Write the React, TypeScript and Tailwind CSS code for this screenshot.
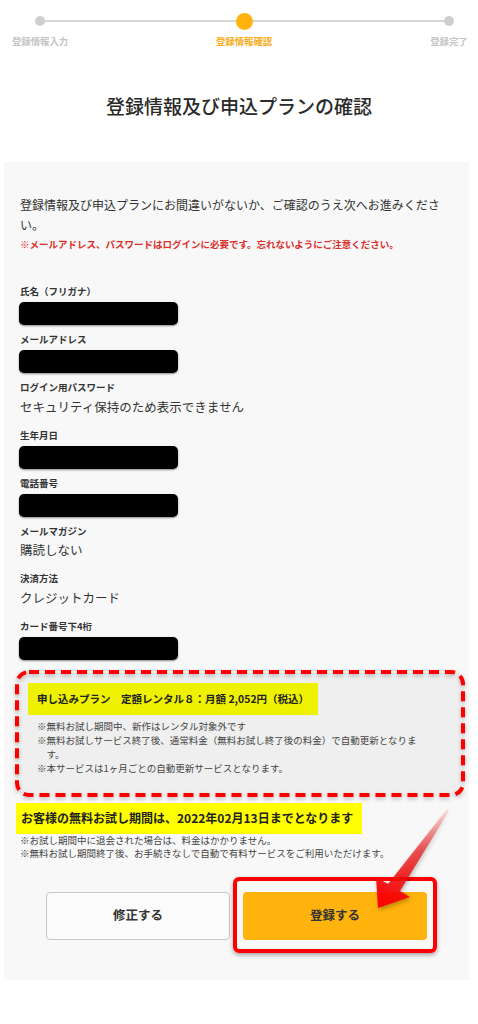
import React from "react";

const font = { fontFamily: '"Noto Sans CJK JP", "Noto Sans", sans-serif' };

function Label({ children }: { children: React.ReactNode }) {
  return <div className="text-[9.5px] font-bold leading-[14px] text-[#333]">{children}</div>;
}

function Block() {
  return <div className="mt-[4px] h-[23px] w-[159px] -ml-[1px] rounded-[5px] bg-black shadow-[0_1px_2px_rgba(0,0,0,0.45)]" />;
}

function Value({ children }: { children: React.ReactNode }) {
  return <div className="mt-[2.5px] text-[12.5px] leading-[20px] text-[#333]">{children}</div>;
}

export default function App() {
  return (
    <div className="relative w-[478px] min-h-[1024px] bg-white" style={font}>
      {/* stepper */}
      <div className="relative pt-[12px]">
        <div className="absolute left-[40px] right-[29px] top-[20px] h-[2px] bg-[#d6d6d6]" />
        <div className="relative flex">
          <div className="ml-[12px] flex w-[56px] flex-col items-center">
            <div className="flex h-[18px] items-center">
              <div className="h-[10px] w-[10px] rounded-full bg-[#cfcfcf]" />
            </div>
            <div className="mt-[4px] whitespace-nowrap text-[9.4px] font-bold leading-[14px] text-[#c4c4c4]">登録情報入力</div>
          </div>
          <div className="ml-[148px] flex w-[56px] flex-col items-center">
            <div className="flex h-[18px] items-center">
              <div className="h-[17px] w-[17px] rounded-full bg-[#ffb30c]" />
            </div>
            <div className="mt-[4px] whitespace-nowrap text-[9.4px] font-bold leading-[14px] text-[#f7ac1a]">登録情報確認</div>
          </div>
          <div className="ml-[149px] flex w-[56px] flex-col items-center">
            <div className="flex h-[18px] items-center">
              <div className="h-[10px] w-[10px] rounded-full bg-[#cfcfcf]" />
            </div>
            <div className="mt-[4px] whitespace-nowrap text-[9.4px] font-bold leading-[14px] text-[#c4c4c4]">登録完了</div>
          </div>
        </div>
      </div>

      <h1 className="mt-[44px] text-center text-[19px] font-medium leading-[28px] text-[#2a2a2a]">登録情報及び申込プランの確認</h1>

      {/* panel */}
      <div className="ml-[4px] mt-[42px] w-[465px] bg-[#f8f8f8] px-4 pb-[40px] pt-[33px]">
        <p className="text-[12px] leading-[20px] text-[#333]">
          登録情報及び申込プランにお間違いがないか、ご確認のうえ次へお進みください。
        </p>
        <p className="mt-[2px] text-[9.5px] font-bold leading-[14px] text-[#dc2f2c]">
          ※メールアドレス、パスワードはログインに必要です。忘れないようにご注意ください。
        </p>

        <div className="mt-[33px]">
          <Label>氏名（フリガナ）</Label>
          <Block />
        </div>
        <div className="mt-[7px]">
          <Label>メールアドレス</Label>
          <Block />
        </div>
        <div className="mt-[7px]">
          <Label>ログイン用パスワード</Label>
          <Value>セキュリティ保持のため表示できません</Value>
        </div>
        <div className="mt-[11px]">
          <Label>生年月日</Label>
          <Block />
        </div>
        <div className="mt-[7px]">
          <Label>電話番号</Label>
          <Block />
        </div>
        <div className="mt-[7px]">
          <Label>メールマガジン</Label>
          <Value>購読しない</Value>
        </div>
        <div className="mt-[11px]">
          <Label>決済方法</Label>
          <Value>クレジットカード</Value>
        </div>
        <div className="mt-[11px]">
          <Label>カード番号下4桁</Label>
          <Block />
        </div>

        {/* plan box */}
        <div className="relative -ml-[5px] mt-[10px] w-[450px] rounded-[14px] bg-[#efefef] px-[13px] pb-[22px] pt-[13px]">
          <div className="inline-block h-[32px] bg-[#eef200] px-[9px] text-[10.5px] font-bold leading-[32px] text-[#222]">
            申し込みプラン　定額レンタル８：月額 2,052円（税込）
          </div>
          <div className="mt-[4px] pl-[9px] pr-[30px] text-[9.5px] leading-[14px] text-[#444]">
            <p className="pl-[1em] -indent-[1em]">※無料お試し期間中、新作はレンタル対象外です</p>
            <p className="pl-[1em] -indent-[1em]">※無料お試しサービス終了後、通常料金（無料お試し終了後の料金）で自動更新となります。</p>
            <p className="pl-[1em] -indent-[1em]">※本サービスは1ヶ月ごとの自動更新サービスとなります。</p>
          </div>
          <svg className="pointer-events-none absolute inset-[2px] h-[calc(100%-4px)] w-[calc(100%-4px)] overflow-visible" style={{ filter: "drop-shadow(0 2px 2px rgba(0,0,0,0.25))" }}>
            <rect x="0" y="0" width="100%" height="100%" rx="12" ry="12" fill="none" stroke="#ff0000" strokeWidth="4" strokeDasharray="10 6" />
          </svg>
        </div>

        {/* trial */}
        <div className="-ml-[4px] mt-[6px] flex h-[31px] w-fit items-center whitespace-nowrap bg-[#ffff00] pl-[5px] pr-[9px] text-[12px] font-bold text-[#222]">
          お客様の無料お試し期間は、2022年02月13日までとなります
        </div>
        <div className="text-[9.5px] leading-[13px] text-[#444]">
          <p>※お試し期間中に退会された場合は、料金はかかりません。</p>
          <p>※無料お試し期間終了後、お手続きなしで自動で有料サービスをご利用いただけます。</p>
        </div>

        {/* buttons */}
        <div className="-ml-[16px] mt-[32px] flex w-[465px] justify-center gap-[13px]">
          <button className="flex h-[48px] w-[184px] items-center justify-center rounded-[4px] border border-[#c8c8c8] bg-[#fbfbfb] text-[12.5px] font-bold text-[#333]">
            修正する
          </button>
          <div className="relative">
            <button className="flex h-[48px] w-[184px] items-center justify-center rounded-[4px] bg-[#ffb30c] text-[12.5px] font-bold text-[#333]">
              登録する
            </button>
            <div className="pointer-events-none absolute -bottom-[13px] -left-[10px] -right-[10px] -top-[15px] rounded-[6px] border-[4px] border-[#ff0000] shadow-[0_2px_4px_rgba(0,0,0,0.35)]" />
          </div>
        </div>
      </div>

      {/* arrow annotation */}
      <svg className="pointer-events-none absolute left-0 top-0" width="478" height="1024" style={{ filter: "drop-shadow(1px 2px 2px rgba(0,0,0,0.3))" }}>
        <defs>
          <linearGradient id="arrowGrad" gradientUnits="userSpaceOnUse" x1="448" y1="809" x2="380" y2="905">
            <stop offset="0" stopColor="#ff0000" stopOpacity="0.08" />
            <stop offset="0.45" stopColor="#ee1111" stopOpacity="0.7" />
            <stop offset="1" stopColor="#ff0000" stopOpacity="1" />
          </linearGradient>
        </defs>
        <polygon points="447,809 388,884 376,877 378,908 410,897 400,891 449,811" fill="url(#arrowGrad)" />
      </svg>
    </div>
  );
}
